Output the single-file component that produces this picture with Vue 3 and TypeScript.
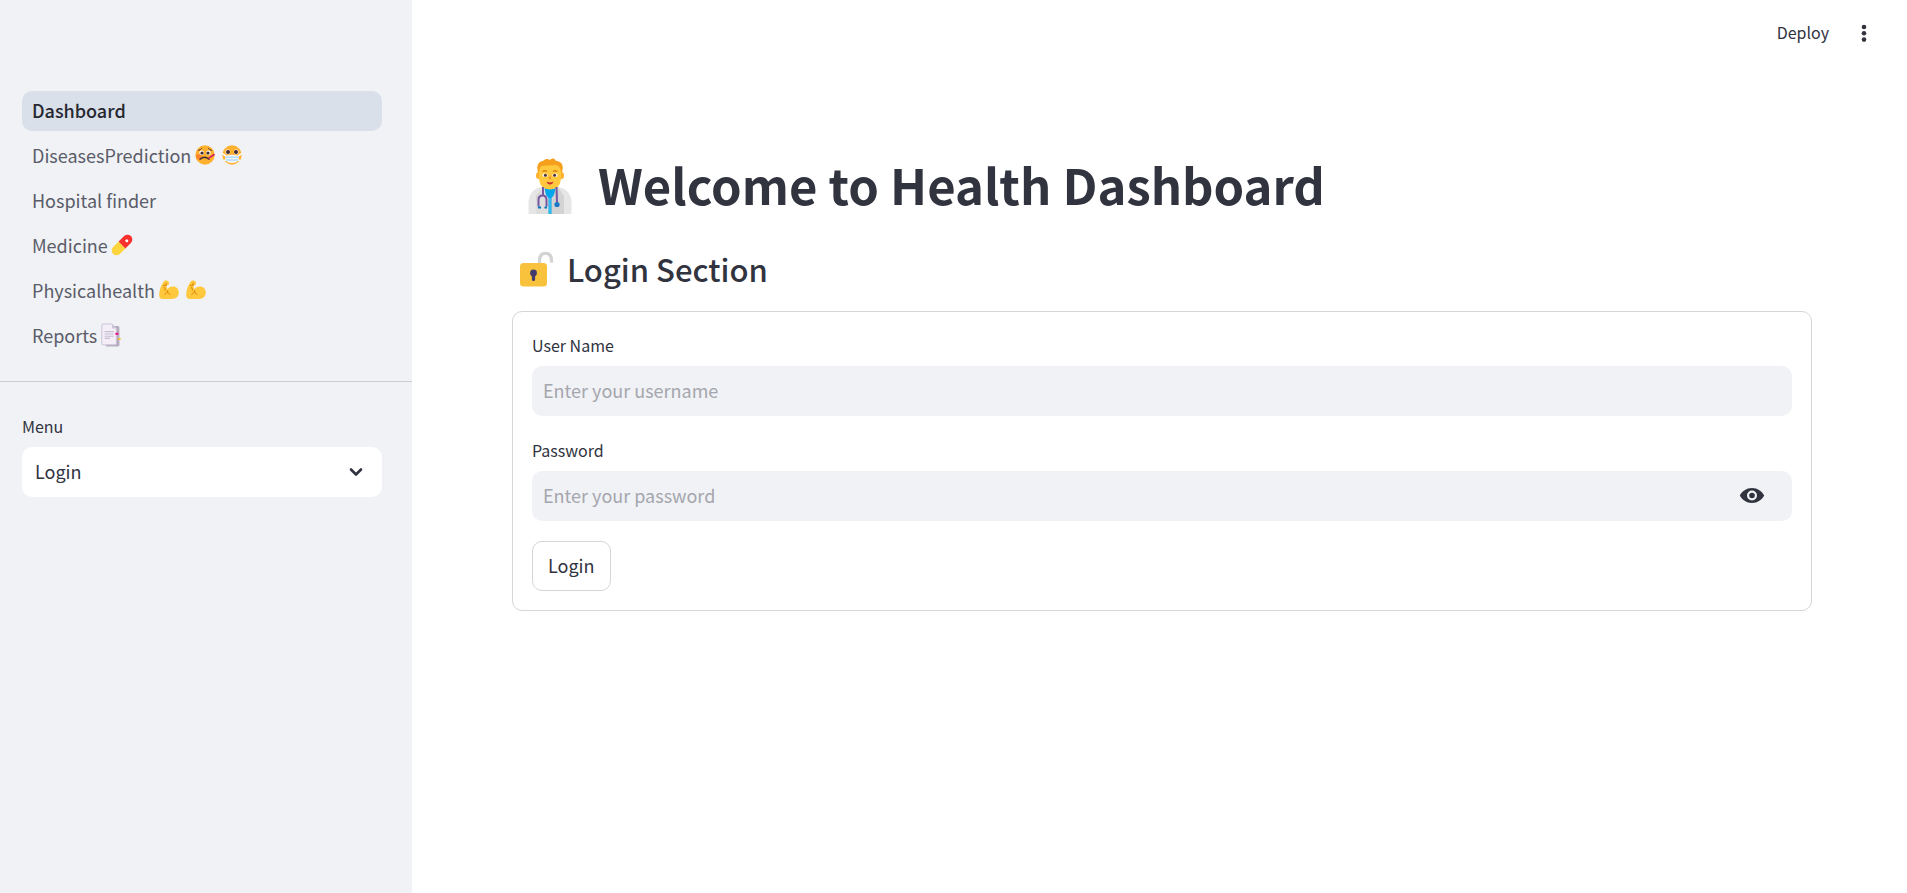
<script setup lang="ts">
import { ref } from 'vue'

type EmojiName = 'thermometer' | 'mask' | 'pill' | 'arm' | 'pages'

interface Page {
  label: string
  href: string
  emoji: EmojiName[]
}

const pages: Page[] = [
  { label: 'Dashboard', href: '#dashboard', emoji: [] },
  { label: 'DiseasesPrediction', href: '#diseases', emoji: ['thermometer', 'mask'] },
  { label: 'Hospital finder', href: '#hospital', emoji: [] },
  { label: 'Medicine', href: '#medicine', emoji: ['pill'] },
  { label: 'Physicalhealth', href: '#physical', emoji: ['arm', 'arm'] },
  { label: 'Reports', href: '#reports', emoji: ['pages'] },
]

const current = ref('Dashboard')
const menu = ref('Login')
const username = ref('')
const password = ref('')
const revealed = ref(false)
</script>

<template>
  <div class="app">
    <aside class="sidebar">
      <nav aria-label="Pages">
        <ul class="pages">
          <li v-for="page in pages" :key="page.label">
            <a
              class="page"
              :class="{ active: page.label === current }"
              :href="page.href"
              @click="current = page.label"
            >
              <span>{{ page.label }}</span>
              <svg v-for="(name, i) in page.emoji" :key="i" class="emoji" viewBox="-4 -2 27 24" aria-hidden="true">
                <g v-if="name === 'thermometer'">
                  <circle cx="10" cy="10" r="9.7" fill="#ffb02e" />
                  <circle cx="3.8" cy="11.6" r="2.6" fill="#ff822d" />
                  <circle cx="6.6" cy="7.8" r="2.3" fill="#fff" />
                  <circle cx="13.4" cy="7.8" r="2.3" fill="#fff" />
                  <circle cx="7" cy="8" r="1.6" fill="#402a32" />
                  <circle cx="13" cy="8" r="1.6" fill="#402a32" />
                  <path d="M3.4 5.4Q5.6 5 6.6 3.4M16.6 5.4Q14.4 5 13.4 3.4" fill="none" stroke="#402a32" stroke-width="0.9" stroke-linecap="round" />
                  <path d="M5 14.2Q9.5 10.2 14 14.2" fill="none" stroke="#402a32" stroke-width="1.3" stroke-linecap="round" />
                  <path d="M14 13L19 9.6" stroke="#ca0b6a" stroke-width="1.5" stroke-linecap="round" />
                </g>
                <g v-else-if="name === 'mask'">
                  <circle cx="10" cy="10" r="9.7" fill="#ffb02e" />
                  <path d="M.3 8.6L4 11M19.7 8.6L16 11M1.6 15.6L5 15M18.4 15.6L15 15" stroke="#fff" stroke-width="1.6" />
                  <circle cx="5.8" cy="7" r="2.4" fill="#fff" />
                  <circle cx="14.2" cy="7" r="2.4" fill="#fff" />
                  <circle cx="6" cy="7" r="2" fill="#402a32" />
                  <circle cx="14" cy="7" r="2" fill="#402a32" />
                  <path d="M3.2 11Q10 8.6 16.8 11V14.5Q15.5 18 10 18T3.2 14.5Z" fill="#f4f4f4" />
                  <path d="M3.4 12.2H16.6M4 15H16" stroke="#aeddff" stroke-width="1.4" />
                </g>
                <g v-else-if="name === 'pill'" transform="rotate(-45 10 10)">
                  <path d="M10 5.2H2.2a4.8 4.8 0 0 0 0 9.6H10Z" fill="#fcd53f" />
                  <path d="M10 5.2h7.8a4.8 4.8 0 0 1 0 9.6H10Z" fill="#f8312f" />
                  <circle cx="16.4" cy="10.400" r="1.5" fill="#fff" />
                </g>
                <g v-else-if="name === 'arm'">
                  <path d="M4.600 1.800C5.400.4 7 .2 8 .8C9.600 1 10.200 2.400 10 3.800C9.900 5 8.800 5.400 7.400 5.400L8.400 9.600C9.200 7.600 11.400 6.400 14 6.400C17.600 6.400 19.800 9 19.800 12.600C19.800 16.800 17 19 13 19H4C1.400 19 .2 17.400 .2 15C.2 10.400 1.600 6 4.600 1.800Z" fill="#ffc83d" />
                  <path d="M4.400 5.400L7.400 5.400M7 3.200V4.600M5 7.200Q6.600 7.600 6.400 10.200M8.600 10.600V12.200L11 14.600M8.400 12L5.800 14.600" fill="none" stroke="#d67d00" stroke-width="0.9" stroke-linecap="round" />
                </g>
                <g v-else>
                  <path d="M5 1h11.8q1.6 0 1.6 1.6V20q0 1.4-1.4 1.4H5Z" fill="#b4acbc" />
                  <path d="M1.8-1H11L15.4 3.6V18.4q0 1.4-1.4 1.4H1.8Q.8 19.8.8 18.6V.2Q.8-1 1.8-1Z" fill="#f3eef8" stroke="#cdc4d6" stroke-width="1" />
                  <path d="M11-1V2.4q0 1.2 1.2 1.2h3.2Z" fill="#cdc4d6" />
                  <path d="M3.6 6.6H12.8M3.6 9H12.8M3.6 11.2H12.8M3.6 13.4H9" stroke="#c8bfd1" stroke-width="1.1" />
                  <path d="M14.4 8.8h3" stroke="#f70a8d" stroke-width="2" />
                  <path d="M17 14h2.6" stroke="#f9c23c" stroke-width="2" />
                </g>
              </svg>
            </a>
          </li>
        </ul>
      </nav>
      <div class="controls">
        <label class="label" for="menu">Menu</label>
        <div class="field">
          <select id="menu" v-model="menu" class="select">
            <option>Login</option>
            <option>SignUp</option>
          </select>
          <svg class="chevron" viewBox="0 0 14 10" aria-hidden="true">
            <path d="M2 2.500L7 7.500L12 2.500" fill="none" stroke="#31333f" stroke-width="2.6" stroke-linecap="round" stroke-linejoin="round" />
          </svg>
        </div>
      </div>
    </aside>

    <div class="main">
      <header class="toolbar">
        <button type="button" class="deploy">Deploy</button>
        <button type="button" class="kebab" aria-label="Main menu">
          <svg viewBox="0 0 6 18" aria-hidden="true">
            <g fill="#31333f">
              <circle cx="3" cy="3" r="2.3" />
              <circle cx="3" cy="9.300" r="2.3" />
              <circle cx="3" cy="15.600" r="2.3" />
            </g>
          </svg>
        </button>
      </header>

      <main class="content">
        <h1 class="title">
          <svg class="doctor" viewBox="0 0 76 60" aria-hidden="true">
            <path d="M16.500 60V48C17 38 24 33 32 33H44C52 33 59 38 59.500 48V60Z" fill="#e6e6e6" />
            <path d="M24 60V42L31 33H46L52 42V60Z" fill="#d3d3d3" />
            <path d="M30 33H38V60H24V48Z" fill="#dedede" />
            <path d="M32 32H44L42 41L39.500 44V60H36.500V44L34 41Z" fill="#00a6ed" />
            <path d="M38 44V60" stroke="#62cdf5" stroke-width="1" />
            <ellipse cx="26.500" cy="21.500" rx="2.500" ry="3.500" fill="#ffb02e" />
            <ellipse cx="49.500" cy="21.500" rx="2.500" ry="3.500" fill="#ffb02e" />
            <path d="M27 14Q38 5 49 14V25Q48 35.500 38 35.500T27 25Z" fill="#ffc83d" />
            <path d="M26 18C24 11 27 7 31 7C34 4 36 5 38 6C41 3 43 5 44 7C50 7 52 12 50 18L49 18C48.500 13 46 11 42 11C37 12 32 11 29 12.500Q27 15 27 18Z" fill="#f59f1c" />
            <path d="M30.500 17.500Q33 16 35 17.500M41 17.500Q43 16 45.500 17.500" fill="none" stroke="#d88310" stroke-width="1.300" />
            <ellipse cx="33" cy="21.300" rx="2.700" ry="1.700" fill="#fff" />
            <ellipse cx="43" cy="21.300" rx="2.700" ry="1.700" fill="#fff" />
            <circle cx="33.400" cy="21.300" r="1.500" fill="#4b3038" />
            <circle cx="42.600" cy="21.300" r="1.500" fill="#4b3038" />
            <path d="M38 21L36.800 25H39.300Z" fill="#f58a2c" />
            <path d="M34.500 27.500Q38 29.300 41.500 27.500Q40.500 30.500 38 30.500T34.500 27.500Z" fill="#c62832" />
            <path d="M31 33V41M44.500 33L45 49" fill="none" stroke="#7657a0" stroke-width="2" />
            <path d="M26.500 52.500V46Q26.500 41.500 30.500 41.500T34.500 46V52.500" fill="none" stroke="#7657a0" stroke-width="2" />
            <path d="M26 53.500H29M32.500 53.500H35" stroke="#0074ba" stroke-width="2" />
            <circle cx="45" cy="50.500" r="2.600" fill="#1678c7" />
          </svg>
          <span>Welcome to Health Dashboard</span>
        </h1>

        <h2 class="section">
          <svg class="padlock" viewBox="0 0 48 42" aria-hidden="true">
            <path d="M27.500 18V12.500Q27.500 5.300 33.500 5.300T39.500 12.500V14.500" fill="none" stroke="#d3d3d3" stroke-width="3.200" />
            <rect x="8" y="15" width="27" height="23.500" rx="3.500" fill="#f9c23c" />
            <circle cx="21.500" cy="25" r="3.400" fill="#433b6b" />
            <path d="M21.500 25V31.500" stroke="#433b6b" stroke-width="3.200" stroke-linecap="round" />
          </svg>
          <span>Login Section</span>
        </h2>

        <form class="form" @submit.prevent>
          <div>
            <label class="label" for="username">User Name</label>
            <div class="field">
              <input id="username" v-model="username" class="input" type="text" placeholder="Enter your username" />
            </div>
          </div>
          <div>
            <label class="label" for="password">Password</label>
            <div class="field input-group">
              <input
                id="password"
                v-model="password"
                class="input"
                :type="revealed ? 'text' : 'password'"
                placeholder="Enter your password"
              />
              <button type="button" class="reveal" aria-label="Show password text" @click="revealed = !revealed">
                <svg viewBox="0 0 26 18" aria-hidden="true">
                  <path d="M13 1C7.500 1 3 4.300 .8 8.500C3 12.700 7.500 16 13 16S23 12.700 25.200 8.500C23 4.300 18.500 1 13 1ZM13 13.500A5 5 0 1 1 13 3.500A5 5 0 0 1 13 13.500Z" fill="#31333f" />
                  <circle cx="13" cy="8.500" r="2.800" fill="#31333f" />
                </svg>
              </button>
            </div>
          </div>
          <button type="submit" class="submit">Login</button>
        </form>
      </main>
    </div>
  </div>
</template>

<style>
body {
  margin: 0;
}
</style>

<style scoped>
.app {
  display: flex;
  min-height: 100vh;
  background: #fff;
  color: #31333f;
  font-family: "Source Sans Pro", "Noto Sans CJK SC", "Noto Sans", sans-serif;
  font-size: 18px;
  line-height: 28px;
}

button,
input,
select {
  margin: 0;
  font: inherit;
  color: inherit;
}

.sidebar {
  box-sizing: border-box;
  flex: 0 0 412px;
  padding-top: 91px;
  background: #f0f2f6;
}

.pages {
  display: flex;
  flex-direction: column;
  gap: 5px;
  margin: 0;
  padding: 0 30px 25px 22px;
  list-style: none;
  border-bottom: 1px solid #cbccd1;
}

.page {
  box-sizing: border-box;
  display: flex;
  align-items: center;
  height: 40px;
  padding: 0 10px 2px;
  border-radius: 10px;
  color: #5a5c69;
  text-decoration: none;
}

.page.active {
  background: #d9e0ea;
  color: #262730;
  font-weight: 500;
}

.emoji {
  width: 27px;
  height: 24px;
  overflow: visible;
}

.controls {
  padding: 30px 30px 30px 22px;
}

.label {
  display: block;
  margin-bottom: 7px;
  font-size: 16px;
  line-height: 28px;
}

.field {
  display: grid;
  align-items: center;
  height: 50px;
  border-radius: 10px;
  background: #f0f2f6;
}

.select {
  grid-area: 1 / 1;
  width: 100%;
  height: 50px;
  padding: 0 13px 2px;
  border: 0;
  border-radius: 10px;
  background: #fff;
  appearance: none;
}

.chevron {
  grid-area: 1 / 1;
  justify-self: end;
  width: 14px;
  height: 10px;
  margin-right: 19px;
  pointer-events: none;
}

.main {
  flex: 1;
  min-width: 0;
}

.toolbar {
  display: flex;
  align-items: center;
  justify-content: flex-end;
  gap: 22px;
  height: 66px;
  padding-right: 30px;
}

.deploy,
.kebab,
.reveal {
  border: 0;
  background: none;
  cursor: pointer;
}

.deploy {
  padding: 0 0 2px;
  font-size: 16px;
}

.kebab {
  display: flex;
  justify-content: center;
  width: 26px;
  padding: 0;
}

.kebab svg {
  width: 6px;
  height: 18px;
}

.content {
  padding: 85px 95px 60px 100px;
}

.title,
.section {
  display: flex;
  align-items: center;
  margin: 0;
}

.title {
  gap: 10px;
  font-size: 49px;
  font-weight: 700;
  line-height: 66px;
}

.doctor {
  width: 76px;
  height: 60px;
}

.section {
  gap: 7px;
  margin: 31px 0 21px;
  font-size: 31px;
  font-weight: 500;
  line-height: 42px;
}

.padlock {
  width: 48px;
  height: 42px;
}

.form {
  display: flex;
  flex-direction: column;
  gap: 20px;
  padding: 19px;
  border: 1px solid #d6d6d9;
  border-radius: 10px;
}

.input {
  box-sizing: border-box;
  width: 100%;
  height: 50px;
  padding: 0 11px 2px;
  border: 0;
  border-radius: 10px;
  background: transparent;
}

.input::placeholder {
  color: #a5a6ad;
  opacity: 1;
}

.input-group {
  grid-template-columns: 1fr auto;
}

.reveal {
  display: flex;
  padding: 12px 27px;
}

.reveal svg {
  width: 26px;
  height: 18px;
}

.submit {
  align-self: flex-start;
  height: 50px;
  padding: 0 15px 2px;
  border: 1px solid #d6d6d9;
  border-radius: 10px;
  background: #fff;
  cursor: pointer;
}
</style>
